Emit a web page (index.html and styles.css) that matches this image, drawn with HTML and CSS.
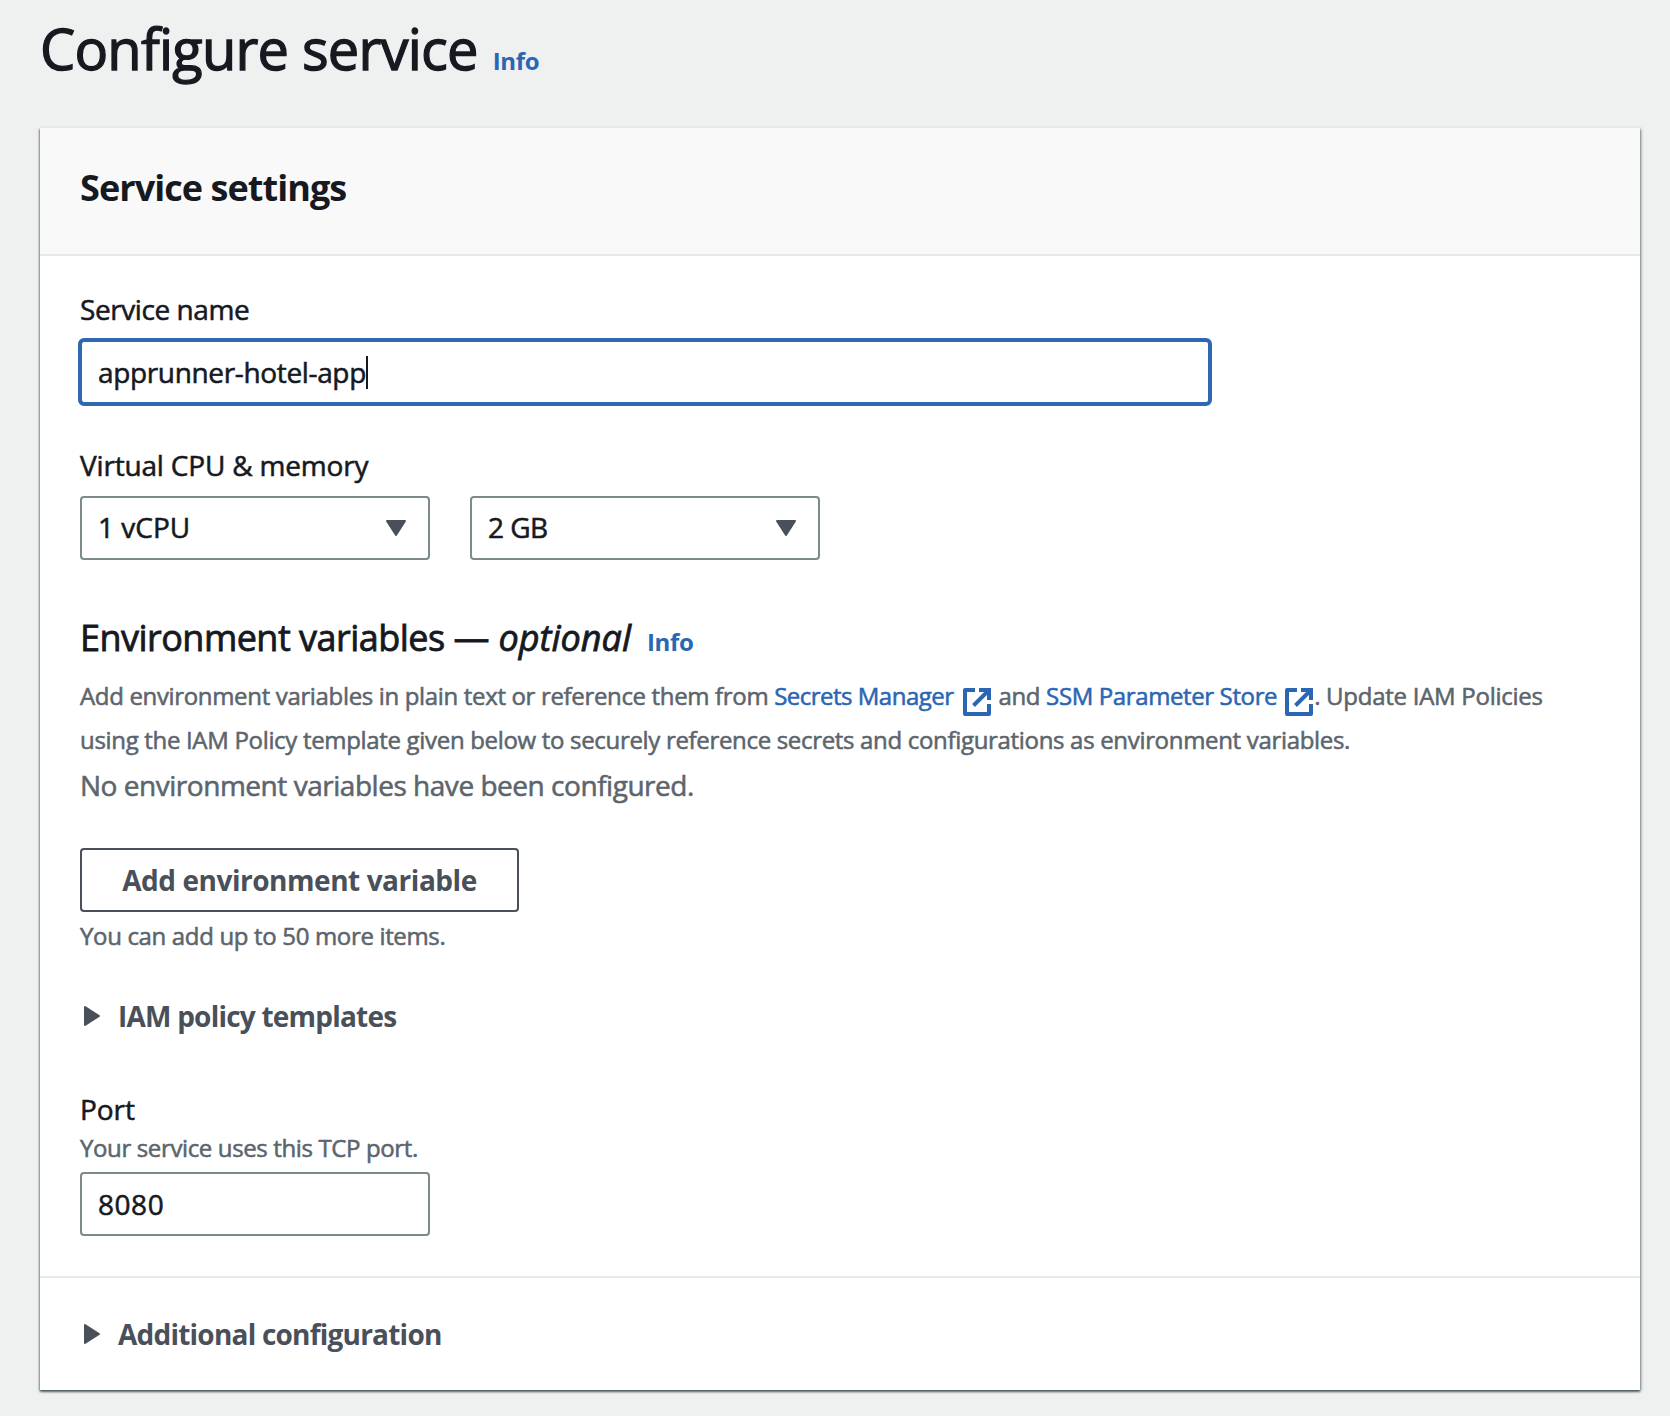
FILE: index.html
```html
<!DOCTYPE html>
<html lang="en">
<head>
<meta charset="utf-8">
<title>Configure service</title>
<link rel="stylesheet" href="styles.css">
</head>
<body>
<header class="page-header">
  <h1 class="page-title">Configure service</h1>
  <a class="info">Info</a>
</header>
<main class="card">
  <div class="card-header"><h2 class="card-title">Service settings</h2></div>
  <div class="card-body">
    <label class="label">Service name</label>
    <div class="input input-focus"><span class="value-name">apprunner-hotel-app</span><span class="caret"></span></div>

    <label class="label label-cpu">Virtual CPU &amp; memory</label>
    <div class="selects">
      <div class="input select"><span class="value-cpu">1 vCPU</span>
        <svg class="arrow" width="20" height="16" viewBox="0 0 20 16"><path d="M1 1H19L10 15Z"/></svg></div>
      <div class="input select"><span class="value-memory">2 GB</span>
        <svg class="arrow" width="20" height="16" viewBox="0 0 20 16"><path d="M1 1H19L10 15Z"/></svg></div>
    </div>

    <div class="env-header">
      <h3 class="env-title">Environment variables <span class="dash">—</span> <em>optional</em></h3>
      <a class="info">Info</a>
    </div>
    <p class="env-text"><span>Add environment variables in plain text or reference them from</span> <a class="link link-secrets">Secrets Manager</a><svg class="external" width="28" height="28" viewBox="0 0 28 28"><path d="M12 2H2V26H26V16"/><path d="M16 2H26V12M25 3L10.5 17.5"/><path class="corner" d="M18 0H28V10Z"/></svg> and <a class="link link-ssm">SSM Parameter Store</a><svg class="external external-last" width="28" height="28" viewBox="0 0 28 28"><path d="M12 2H2V26H26V16"/><path d="M16 2H26V12M25 3L10.5 17.5"/><path class="corner" d="M18 0H28V10Z"/></svg>. <span class="tail">Update IAM Policies</span><br>using the IAM Policy template given below to securely reference secrets and configurations as environment variables.</p>
    <p class="env-empty">No environment variables have been configured.</p>
    <button class="button" type="button">Add environment variable</button>
    <p class="hint hint-items">You can add up to 50 more items.</p>

    <div class="expander expander-iam">
      <svg class="arrow" width="16" height="20" viewBox="0 0 16 20"><path d="M1 1V19L15 10Z"/></svg>
      <span>IAM policy templates</span>
    </div>

    <label class="label label-port">Port</label>
    <p class="hint hint-port">Your service uses this TCP port.</p>
    <div class="input input-port"><span class="value-port">8080</span></div>
  </div>
  <div class="card-footer">
    <div class="expander">
      <svg class="arrow" width="16" height="20" viewBox="0 0 16 20"><path d="M1 1V19L15 10Z"/></svg>
      <span>Additional configuration</span>
    </div>
  </div>
</main>
</body>
</html>
```
FILE: styles.css
```css
* { box-sizing: border-box; }

body {
  margin: 0;
  min-height: 1416px;
  background: #eff1f1;
  color: #16191f;
  font: 28px/44px "Open Sans", "Noto Sans", sans-serif;
  -webkit-text-stroke: 0.55px currentColor;
}

h1, h2, h3, p { margin: 0; font-weight: 400; }

.page-header {
  display: flex;
  align-items: baseline;
  gap: 15px;
  padding: 14px 40px 0;
  height: 128px;
}
.page-title {
  font-size: 56px;
  line-height: 68px;
  letter-spacing: -0.8px;
  -webkit-text-stroke-width: 1.3px;
}
.info {
  color: #2b66b3;
  font-size: 24px;
  font-weight: 700;
  line-height: 36px;
  letter-spacing: -0.34px;
  -webkit-text-stroke: 0;
}

.card {
  width: 1600px;
  margin-left: 40px;
  background: #fff;
  box-shadow: 0 -2px 0 0 #e7e9e9, 0 2px 2px 0 rgba(0, 28, 36, 0.45), 1px 1px 3px 0 rgba(0, 28, 36, 0.4), -1px 1px 2px 0 rgba(0, 28, 36, 0.3);
}
.card-header {
  height: 128px;
  padding: 38px 40px 0;
  background: #f9f9f9;
  border-bottom: 2px solid #e7e9e9;
}
.card-title {
  font-size: 36px;
  font-weight: 700;
  letter-spacing: -0.94px;
  -webkit-text-stroke: 0;
}
.card-body { padding: 31px 40px 40px; }

.label { display: block; letter-spacing: -0.42px; }
.label-cpu { margin-top: 37px; letter-spacing: -0.18px; }
.label-port { margin-top: 49px; letter-spacing: -0.05px; }

.input {
  display: flex;
  align-items: center;
  width: 350px;
  height: 64px;
  padding: 0 16px;
  border: 2px solid #7d8a8b;
  border-radius: 4px;
  background: #fff;
  line-height: 60px;
}
.input-focus {
  width: 1134px;
  height: 68px;
  margin: 7px 0 0 -2px;
  border: 4px solid #3067b1;
  border-radius: 6px;
}
.input-port { margin-top: 7px; }
.value-name { letter-spacing: -0.35px; }
.value-cpu { letter-spacing: 0; }
.value-memory { letter-spacing: -0.55px; }
.value-port { letter-spacing: 0.55px; }
.caret { width: 2px; height: 33px; background: #16191f; }

.selects { display: flex; gap: 40px; margin-top: 9px; }
.select { justify-content: space-between; padding-right: 22px; line-height: 58px; padding-bottom: 2px; }
.select .arrow { margin-top: 2px; }
.arrow path {
  fill: #4a505a;
  stroke: #4a505a;
  stroke-width: 2;
  stroke-linejoin: round;
}

.env-header { display: flex; align-items: baseline; gap: 16px; margin-top: 56px; height: 44px; }
.env-title { font-size: 36px; letter-spacing: -0.53px; -webkit-text-stroke-width: 0.8px; }
.env-title em { letter-spacing: 0; }
.dash { letter-spacing: 0.3px; }
.env-text {
  margin-top: 14px;
  color: #5c656d;
  font-size: 24px;
  letter-spacing: -0.32px;
  white-space: nowrap;
}
.env-text > span:first-child { letter-spacing: -0.34px; }
.link { color: #2b66b3; }
.link-secrets { letter-spacing: -0.51px; }
.link-ssm { letter-spacing: -0.38px; }
.tail { letter-spacing: -0.26px; }
.external { margin: 0 2px 0 9px; vertical-align: -11px; }
.external-last { margin: 0 1px 0 8px; }
.external path { fill: none; stroke: #2b66b3; stroke-width: 4; stroke-linejoin: round; }
.external .corner { fill: #2b66b3; stroke: none; }

.env-empty { margin-top: 1px; color: #5c656d; letter-spacing: -0.47px; }

.button {
  display: block;
  width: 439px;
  height: 64px;
  margin-top: 41px;
  padding: 0;
  border: 2px solid #4a505a;
  border-radius: 4px;
  background: #fff;
  color: #4a505a;
  font: 700 28px/58px "Open Sans", "Noto Sans", sans-serif;
  letter-spacing: -0.46px;
  -webkit-text-stroke: 0;
}

.hint { color: #5c656d; font-size: 24px; line-height: 36px; letter-spacing: -0.34px; }
.hint-items { margin-top: 6px; }
.hint-port { line-height: 34px; letter-spacing: -0.37px; }

.expander {
  display: flex;
  align-items: center;
  gap: 18px;
  padding-left: 4px;
  color: #4a505a;
  font-weight: 700;
  letter-spacing: -0.78px;
  -webkit-text-stroke: 0;
}
.expander-iam { margin-top: 40px; }

.card-footer { height: 114px; padding: 34px 40px 0; border-top: 2px solid #e7e9e9; }
```
